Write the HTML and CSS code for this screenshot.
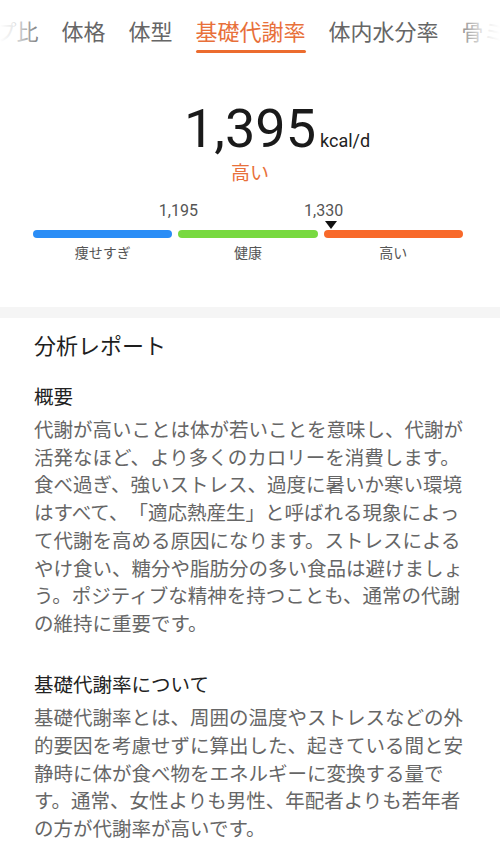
FILE: index.html
```html
<!DOCTYPE html>
<html lang="ja">
<head>
<meta charset="utf-8">
<title>基礎代謝率</title>
<link rel="stylesheet" href="styles.css">
</head>
<body>
<header class="tabs">
  <nav class="tab-track">
    <div class="tab">ヒップ比</div>
    <div class="tab">体格</div>
    <div class="tab">体型</div>
    <div class="tab active">基礎代謝率</div>
    <div class="tab">体内水分率</div>
    <div class="tab">骨ミネラル量</div>
  </nav>
</header>

<section class="summary">
  <div class="value-row">
    <span></span>
    <span class="value">1,395</span>
    <span class="unit">kcal/d</span>
  </div>
  <div class="level">高い</div>

  <div class="scale">
    <div class="ticks">
      <span></span>
      <span class="tick">1,195</span>
      <span class="tick">1,330</span>
    </div>
    <div class="bars">
      <div class="bar bar-low"></div>
      <div class="bar bar-ok"></div>
      <div class="bar bar-high"></div>
      <div class="marker" style="left: 69.3%"></div>
    </div>
    <div class="labels">
      <span>痩せすぎ</span>
      <span>健康</span>
      <span>高い</span>
    </div>
  </div>
</section>

<div class="divider"></div>

<section class="report">
  <h2 class="report-title">分析レポート</h2>
  <h3 class="sec-title">概要</h3>
  <p class="sec-text">代謝が高いことは体が若いことを意味し、代謝が活発なほど、より多くのカロリーを消費します。食べ過ぎ、強いストレス、過度に暑いか寒い環境はすべて、「適応熱産生」と呼ばれる現象によって代謝を高める原因になります。ストレスによるやけ食い、糖分や脂肪分の多い食品は避けましょう。ポジティブな精神を持つことも、通常の代謝の維持に重要です。</p>
  <h3 class="sec-title sec-gap">基礎代謝率について</h3>
  <p class="sec-text">基礎代謝率とは、周囲の温度やストレスなどの外的要因を考慮せずに算出した、起きている間と安静時に体が食べ物をエネルギーに変換する量です。通常、女性よりも男性、年配者よりも若年者の方が代謝率が高いです。</p>
</section>
</body>
</html>
```

FILE: styles.css
```css
html, body {
  margin: 0;
  padding: 0;
  background: #ffffff;
}

body {
  font-family: Roboto, "Noto Sans CJK JP", sans-serif;
  color: #222222;
  width: 500px;
  overflow: hidden;
  text-spacing-trim: space-all;
}

/* ---------- tabs ---------- */
.tabs {
  position: relative;
  height: 56px;
  overflow: hidden;
}

.tabs::before,
.tabs::after {
  content: "";
  position: absolute;
  top: 0;
  bottom: 0;
  pointer-events: none;
}

.tabs::before {
  left: 0;
  width: 44px;
  background: linear-gradient(to right, rgba(255,255,255,1) 0%, rgba(255,255,255,0.85) 30%, rgba(255,255,255,0) 100%);
}

.tabs::after {
  right: 0;
  width: 48px;
  background: linear-gradient(to left, rgba(255,255,255,1) 0%, rgba(255,255,255,0.85) 35%, rgba(255,255,255,0) 100%);
}

.tab-track {
  display: flex;
  gap: 23px;
  margin-left: -49.5px;
  white-space: nowrap;
}

.tab {
  flex: none;
  font-family: "Noto Sans CJK JP", sans-serif;
  font-size: 22px;
  line-height: 30px;
  padding-top: 15px;
  color: #666666;
}

.tab.active {
  color: #e8703a;
}

.tab.active::after {
  content: "";
  display: block;
  height: 3px;
  margin-top: 5px;
  border-radius: 2px;
  background: #ec6c2e;
}

/* ---------- summary ---------- */
.summary {
  padding-top: 40.5px;
}

.value-row {
  display: grid;
  grid-template-columns: 1fr auto 1fr;
  align-items: baseline;
}

.value {
  font-size: 54px;
  line-height: 64px;
  color: #1a1a1a;
  font-weight: 400;
}

.unit {
  justify-self: start;
  margin-left: 4px;
  font-size: 18px;
  color: #222222;
}

.level {
  text-align: center;
  font-size: 19px;
  line-height: 26px;
  color: #e8703a;
}

.scale {
  margin: 14px 37px 0 33px;
}

.ticks,
.bars,
.labels {
  display: grid;
  grid-template-columns: repeat(3, 1fr);
  column-gap: 6px;
}

.ticks {
  font-size: 16px;
  line-height: 20px;
  color: #555555;
}

.tick {
  justify-self: start;
  transform: translateX(-50%);
}

.bars {
  position: relative;
  margin-top: 9px;
}

.bar {
  height: 8px;
  border-radius: 4px;
}

.bar-low { background: #2a8df6; }
.bar-ok { background: #78d940; }
.bar-high { background: #f8692a; }

.marker {
  position: absolute;
  top: -9px;
  width: 0;
  height: 0;
  border-left: 6px solid transparent;
  border-right: 6px solid transparent;
  border-top: 8px solid #111111;
  transform: translateX(-50%);
}

.labels {
  margin-top: 5.5px;
  font-size: 14px;
  line-height: 20px;
  color: #555555;
  text-align: center;
}

/* ---------- divider ---------- */
.divider {
  margin-top: 43.5px;
  height: 11px;
  background: #f5f5f5;
}

/* ---------- report ---------- */
.report {
  padding: 14.5px 34px 0 34px;
}

.report-title {
  margin: 0;
  font-size: 22px;
  line-height: 30px;
  font-weight: 400;
  color: #1e1e1e;
}

.sec-title {
  margin: 22px 0 0 0;
  font-size: 19.5px;
  line-height: 27.75px;
  font-weight: 400;
  color: #222222;
}

.sec-gap {
  margin-top: 33.7px;
}

.sec-text {
  margin: 5px 0 0 0;
  font-size: 19.5px;
  line-height: 27.75px;
  color: #666666;
}
```
